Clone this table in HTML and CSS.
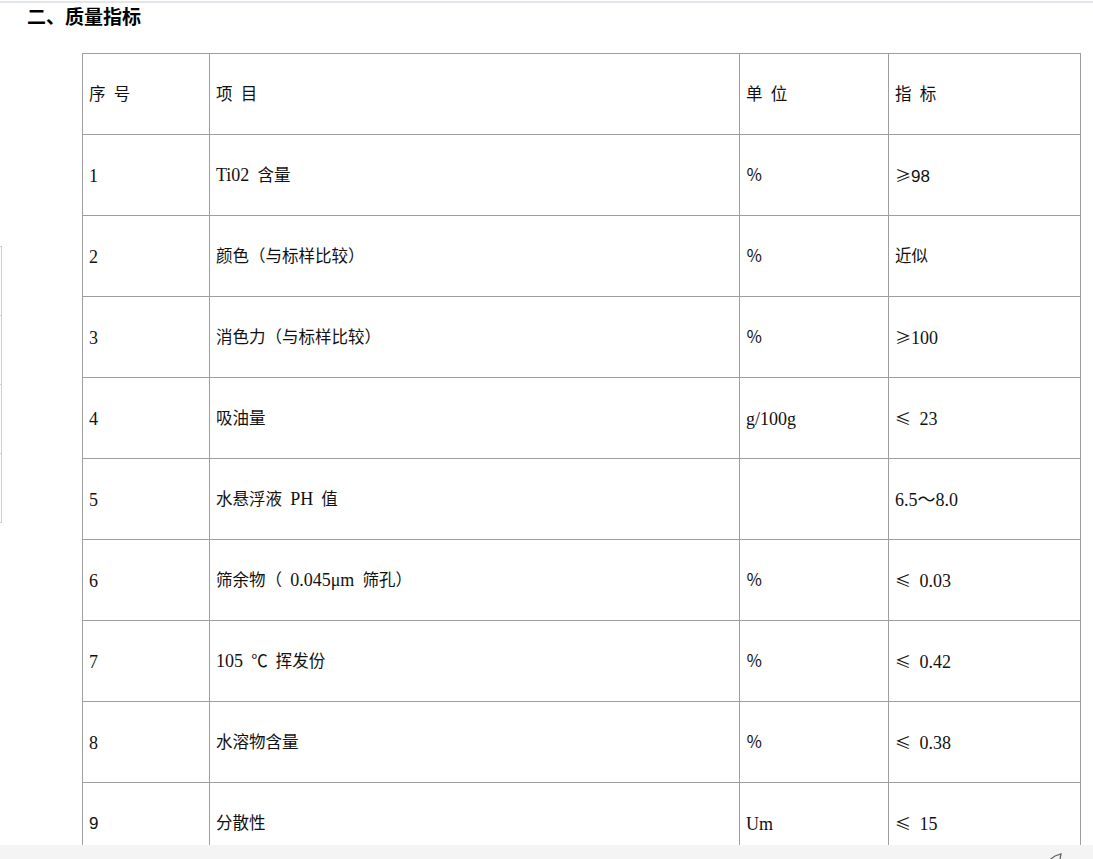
FILE: index.html
```html
<!DOCTYPE html>
<html lang="zh-CN">
<head>
<meta charset="utf-8">
<title>质量指标</title>
<link rel="stylesheet" href="styles.css">
</head>
<body>
<div class="topline"></div>
<h2 class="heading">二、质量指标</h2>
<table class="spec">
  <colgroup>
    <col class="c1"><col class="c2"><col class="c3"><col class="c4">
  </colgroup>
  <tr><td class="cjk">序 号</td><td>项 目</td><td class="cjk">单 位</td><td class="cjk">指 标</td></tr>
  <tr><td>1</td><td><span class="lat">Ti02</span> 含量</td><td class="cjk">％</td><td class="sans"><span class="sym">≥</span>98</td></tr>
  <tr><td>2</td><td>颜色（与标样比较）</td><td class="cjk">％</td><td class="cjk">近似</td></tr>
  <tr><td>3</td><td>消色力（与标样比较）</td><td class="cjk">％</td><td><span class="sym">≥</span>100</td></tr>
  <tr><td>4</td><td>吸油量</td><td>g/100g</td><td><span class="sym">≤</span> 23</td></tr>
  <tr><td>5</td><td>水悬浮液 <span class="lat">PH</span> 值</td><td></td><td>6.5～8.0</td></tr>
  <tr><td>6</td><td>筛余物（ <span class="lat">0.045μm</span> 筛孔）</td><td class="cjk">％</td><td><span class="sym">≤</span> 0.03</td></tr>
  <tr><td>7</td><td><span class="lat">105</span> ℃ 挥发份</td><td class="cjk">％</td><td><span class="sym">≤</span> 0.42</td></tr>
  <tr><td>8</td><td>水溶物含量</td><td class="cjk">％</td><td><span class="sym">≤</span> 0.38</td></tr>
  <tr><td class="sans">9</td><td>分散性</td><td>Um</td><td><span class="sym">≤</span> 15</td></tr>
</table>
<div class="sidebar">
  <div class="tab"></div><div class="tab"></div><div class="tab"></div><div class="tab"></div>
</div>
<div class="bottombar">
  <svg class="bar-icon" width="18" height="14" viewBox="0 0 18 14"><path d="M2 14 L9 9 L15 7 L14 12" fill="none" stroke="#666" stroke-width="1.3"/></svg>
</div>
</body>
</html>
```
FILE: styles.css
```css
html, body {
  margin: 0;
  padding: 0;
  background: #fff;
  color: #111;
  font-family: "Liberation Serif", "Noto Sans CJK SC", serif;
}
.topline {
  margin-top: 1px;
  height: 2px;
  background: #e3e6ea;
}
.heading {
  margin: 1px 0 0 27px;
  font-size: 19px;
  line-height: 24px;
  font-weight: bold;
  font-family: "Noto Sans CJK SC", sans-serif;
  color: #000;
}
.spec {
  margin: 25px 0 0 82px;
  border-collapse: collapse;
  table-layout: fixed;
  width: 998px;
  font-size: 18px;
  word-spacing: 4px;
}
.c1 { width: 127px; }
.c2 { width: 530px; }
.c3 { width: 149px; }
.c4 { width: 192px; }
.spec td {
  border: 1px solid #9e9e9e;
  height: 81px;
  padding: 1px 6px 0;
  box-sizing: border-box;
  vertical-align: middle;
  line-height: 20px;
}
.spec td:nth-child(2) { font-size: 16.5px; }
.spec td.cjk { font-size: 16.5px; }
.lat { font-size: 18px; }
.sans {
  font-family: "Liberation Sans", "Noto Sans CJK SC", sans-serif;
  font-size: 17px;
}
.sym {
  display: inline-block;
  width: 16px;
  font-family: "Noto Sans CJK SC", sans-serif;
  font-size: 16px;
  word-spacing: 0;
}
.sidebar {
  position: fixed;
  left: 0;
  top: 246px;
  display: flex;
  flex-direction: column;
}
.tab {
  width: 1px;
  height: 68px;
  border: 1px solid #cfcfcf;
  border-left: none;
  margin-bottom: -1px;
}
.bottombar {
  position: fixed;
  left: 0;
  right: 0;
  bottom: 0;
  height: 14px;
  background: #f4f4f4;
  overflow: hidden;
}
.bar-icon {
  position: absolute;
  left: 1046px;
  top: 2px;
}
```
